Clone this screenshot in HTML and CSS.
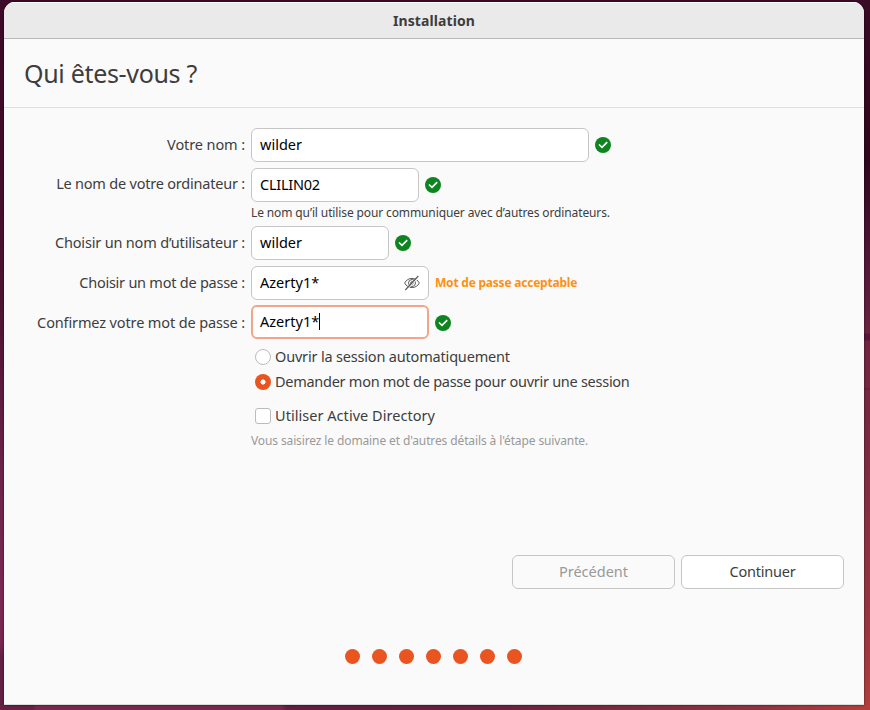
FILE: index.html
```html
<!DOCTYPE html>
<html lang="fr">
<head>
<meta charset="utf-8">
<title>Installation</title>
<link rel="stylesheet" href="styles.css">
</head>
<body>
<svg class="defs" width="0" height="0">
  <symbol id="check" viewBox="0 0 16 16">
    <circle cx="8" cy="8" r="8" fill="#0e8420"/>
    <path d="M4 7.500 7 10.400 12.200 5.200" fill="none" stroke="#fff" stroke-width="1.700"/>
  </symbol>
</svg>
<main class="window">
  <header class="titlebar">Installation</header>
  <h1 class="heading">Qui êtes-vous ?</h1>
  <form class="form">
    <div class="row">
      <label class="label ls-10">Votre nom :</label>
      <div class="field w-name">wilder</div>
      <svg class="ok"><use href="#check"/></svg>
    </div>
    <div class="row">
      <label class="label ls-21 raised">Le nom de votre ordinateur :</label>
      <div class="field w-host ls-24">CLILIN02</div>
      <svg class="ok"><use href="#check"/></svg>
    </div>
    <p class="hint hint-host">Le nom qu’il utilise pour communiquer avec d’autres ordinateurs.</p>
    <div class="row">
      <label class="label ls-18">Choisir un nom d’utilisateur :</label>
      <div class="field w-user">wilder</div>
      <svg class="ok"><use href="#check"/></svg>
    </div>
    <div class="row">
      <label class="label ls-24">Choisir un mot de passe :</label>
      <div class="field w-pass">Azerty1*
        <svg class="eye" viewBox="0 0 16 16" fill="none" stroke="#5f5f5f">
          <path d="M.6 8C2.2 5 5 3.4 8 3.4S13.800 5 15.400 8C13.800 11 11 12.600 8 12.600S2.200 11 .6 8z"/>
          <circle cx="8" cy="8" r="3.500"/>
          <circle cx="8" cy="8" r="1.300"/>
          <path d="M15 1.900 2.200 15.500" stroke="#fff" stroke-width="1"/>
          <path d="M14.300 1 1.300 15" stroke-width="1.200"/>
        </svg>
      </div>
      <span class="strength">Mot de passe acceptable</span>
    </div>
    <div class="row row-confirm">
      <label class="label ls-13">Confirmez votre mot de passe :</label>
      <div class="field w-pass focused">Azerty1*<i class="caret"></i></div>
      <svg class="ok"><use href="#check"/></svg>
    </div>
    <div class="choices">
      <label class="choice ls-18"><span class="radio"></span>Ouvrir la session automatiquement</label>
      <label class="choice ls-27"><span class="radio on"></span>Demander mon mot de passe pour ouvrir une session</label>
      <label class="choice choice-ad"><span class="box"></span>Utiliser Active Directory</label>
    </div>
    <p class="hint muted">Vous saisirez le domaine et d'autres détails à l'étape suivante.</p>
  </form>
  <div class="actions">
    <button class="btn" disabled>Précédent</button>
    <button class="btn ls-21">Continuer</button>
  </div>
  <div class="dots"><i></i><i></i><i></i><i></i><i></i><i></i><i></i></div>
</main>
</body>
</html>
```
FILE: styles.css
```css
* { box-sizing: border-box; }
body {
  margin: 0;
  height: 710px;
  padding: 2px 6px 5px 4px;
  overflow: hidden;
  font: 14.5px/20px "Noto Sans", "Open Sans", sans-serif;
  color: #3d3d3d;
  background:
    linear-gradient(90deg, #662246 33px, #782751 36px, #782751 281px, #5f1f42 287px, #66223f 480px, #92323f 760px, #b43f3c) 0 705px / 870px 5px no-repeat,
    linear-gradient(#390b25, #34081f 110px, #2f061c 158px, #3f0f2b 210px, #58193a 280px, #6a2140 333px, #571438 334px, #571438 340px, #702340 341px, #762640 388px, #5f1b3a 389px, #762640 390px, #7a2941 450px, #8b3040 540px, #97343f 620px, #b03d3c) 864px 0 / 6px 705px no-repeat,
    linear-gradient(#3d0a28, #430b2a 150px, #4d1232 300px, #6f234b 480px, #7c2854 600px, #782650 645px, #642044 656px, #642044) 0 0 / 4px 705px no-repeat,
    #3d0b27;
}
.defs { position: absolute; }
.window {
  height: 703px;
  background: #fafafa;
  border-radius: 11px 11px 0 0;
  border-bottom: 1px solid #dcdcdc;
  box-shadow: 0 0 2px rgba(0, 0, 0, .8);
  overflow: hidden;
}
.titlebar {
  height: 37px;
  background: #eaeaea;
  border-bottom: 1px solid #b9b9b9;
  box-shadow: inset 0 1px #fff;
  text-align: center;
  font-weight: 700;
  font-size: 14px;
  line-height: 37px;
  letter-spacing: .09px;
}
.heading {
  margin: 0;
  height: 69px;
  padding-left: 20px;
  border-bottom: 1px solid #dfdfdf;
  font-size: 25px;
  font-weight: 400;
  line-height: 68px;
  letter-spacing: -.32px;
}
.form { padding-top: 20px; height: 447px; }
.row { display: flex; align-items: center; height: 34px; margin-bottom: 6px; }
.row-confirm { margin-top: -1px; }
.label { width: 241px; margin-right: 6px; padding-bottom: 2px; text-align: right; white-space: nowrap; }
.raised { padding-bottom: 4px; }
.row-confirm .label { padding-bottom: 0; }
.row-confirm .ok { margin-top: 2px; }
.field {
  display: flex;
  align-items: center;
  height: 34px;
  padding: 0 8px 2px;
  background: #fff;
  border: 1px solid #c6c6c6;
  border-radius: 6px;
  color: #000;
}
.w-name { width: 338px; }
.w-host { width: 168px; }
.w-user { width: 138px; }
.w-pass { width: 178px; }
.focused { border: 2px solid #f3a58b; padding: 0 7px 2px; }
.caret { width: 1px; height: 17px; background: #000; }
.eye { width: 16px; height: 16px; margin: 2px 0 0 auto; }
.ok { width: 16px; height: 16px; margin-left: 6px; }
.strength { margin-left: 6px; font-size: 12px; font-weight: 700; letter-spacing: -.22px; color: #ff9010; }
.hint { margin: 0 0 0 247px; font-size: 12px; line-height: 18px; letter-spacing: -.12px; }
.hint-host { height: 18px; margin-top: -4px; margin-bottom: 4px; }
.muted { color: #999; }
.choices { margin: -1px 0 0 251px; }
.choice { display: flex; align-items: center; height: 25px; gap: 4px; padding-bottom: 2px; }
.choice-ad { margin: 9px 0 4px; letter-spacing: .04px; }
.radio, .box { width: 16px; height: 16px; margin-top: 2px; background: #fff; border: 1px solid #bcbcbc; border-radius: 50%; }
.box { border-radius: 3px; }
.radio.on { border: 0; background: radial-gradient(circle, #fff 2.200px, #e95420 2.900px); }
.actions { display: flex; justify-content: flex-end; gap: 6px; padding-right: 20px; }
.btn {
  width: 163px;
  height: 34px;
  padding: 0 0 2px;
  border: 1px solid #c6c6c6;
  border-radius: 6px;
  background: #fff;
  font: inherit;
  color: #3d3d3d;
}
.btn:disabled { background: #fafafa; color: #999; }
.dots { display: flex; justify-content: center; gap: 12px; margin-top: 60px; padding-right: 1px; }
.dots i { width: 15px; height: 15px; border-radius: 50%; background: #e95420; }
.ls-10 { letter-spacing: -.1px; }
.ls-13 { letter-spacing: -.13px; }
.ls-18 { letter-spacing: -.18px; }
.ls-21 { letter-spacing: -.21px; }
.ls-24 { letter-spacing: -.24px; }
.ls-27 { letter-spacing: -.27px; }
```
